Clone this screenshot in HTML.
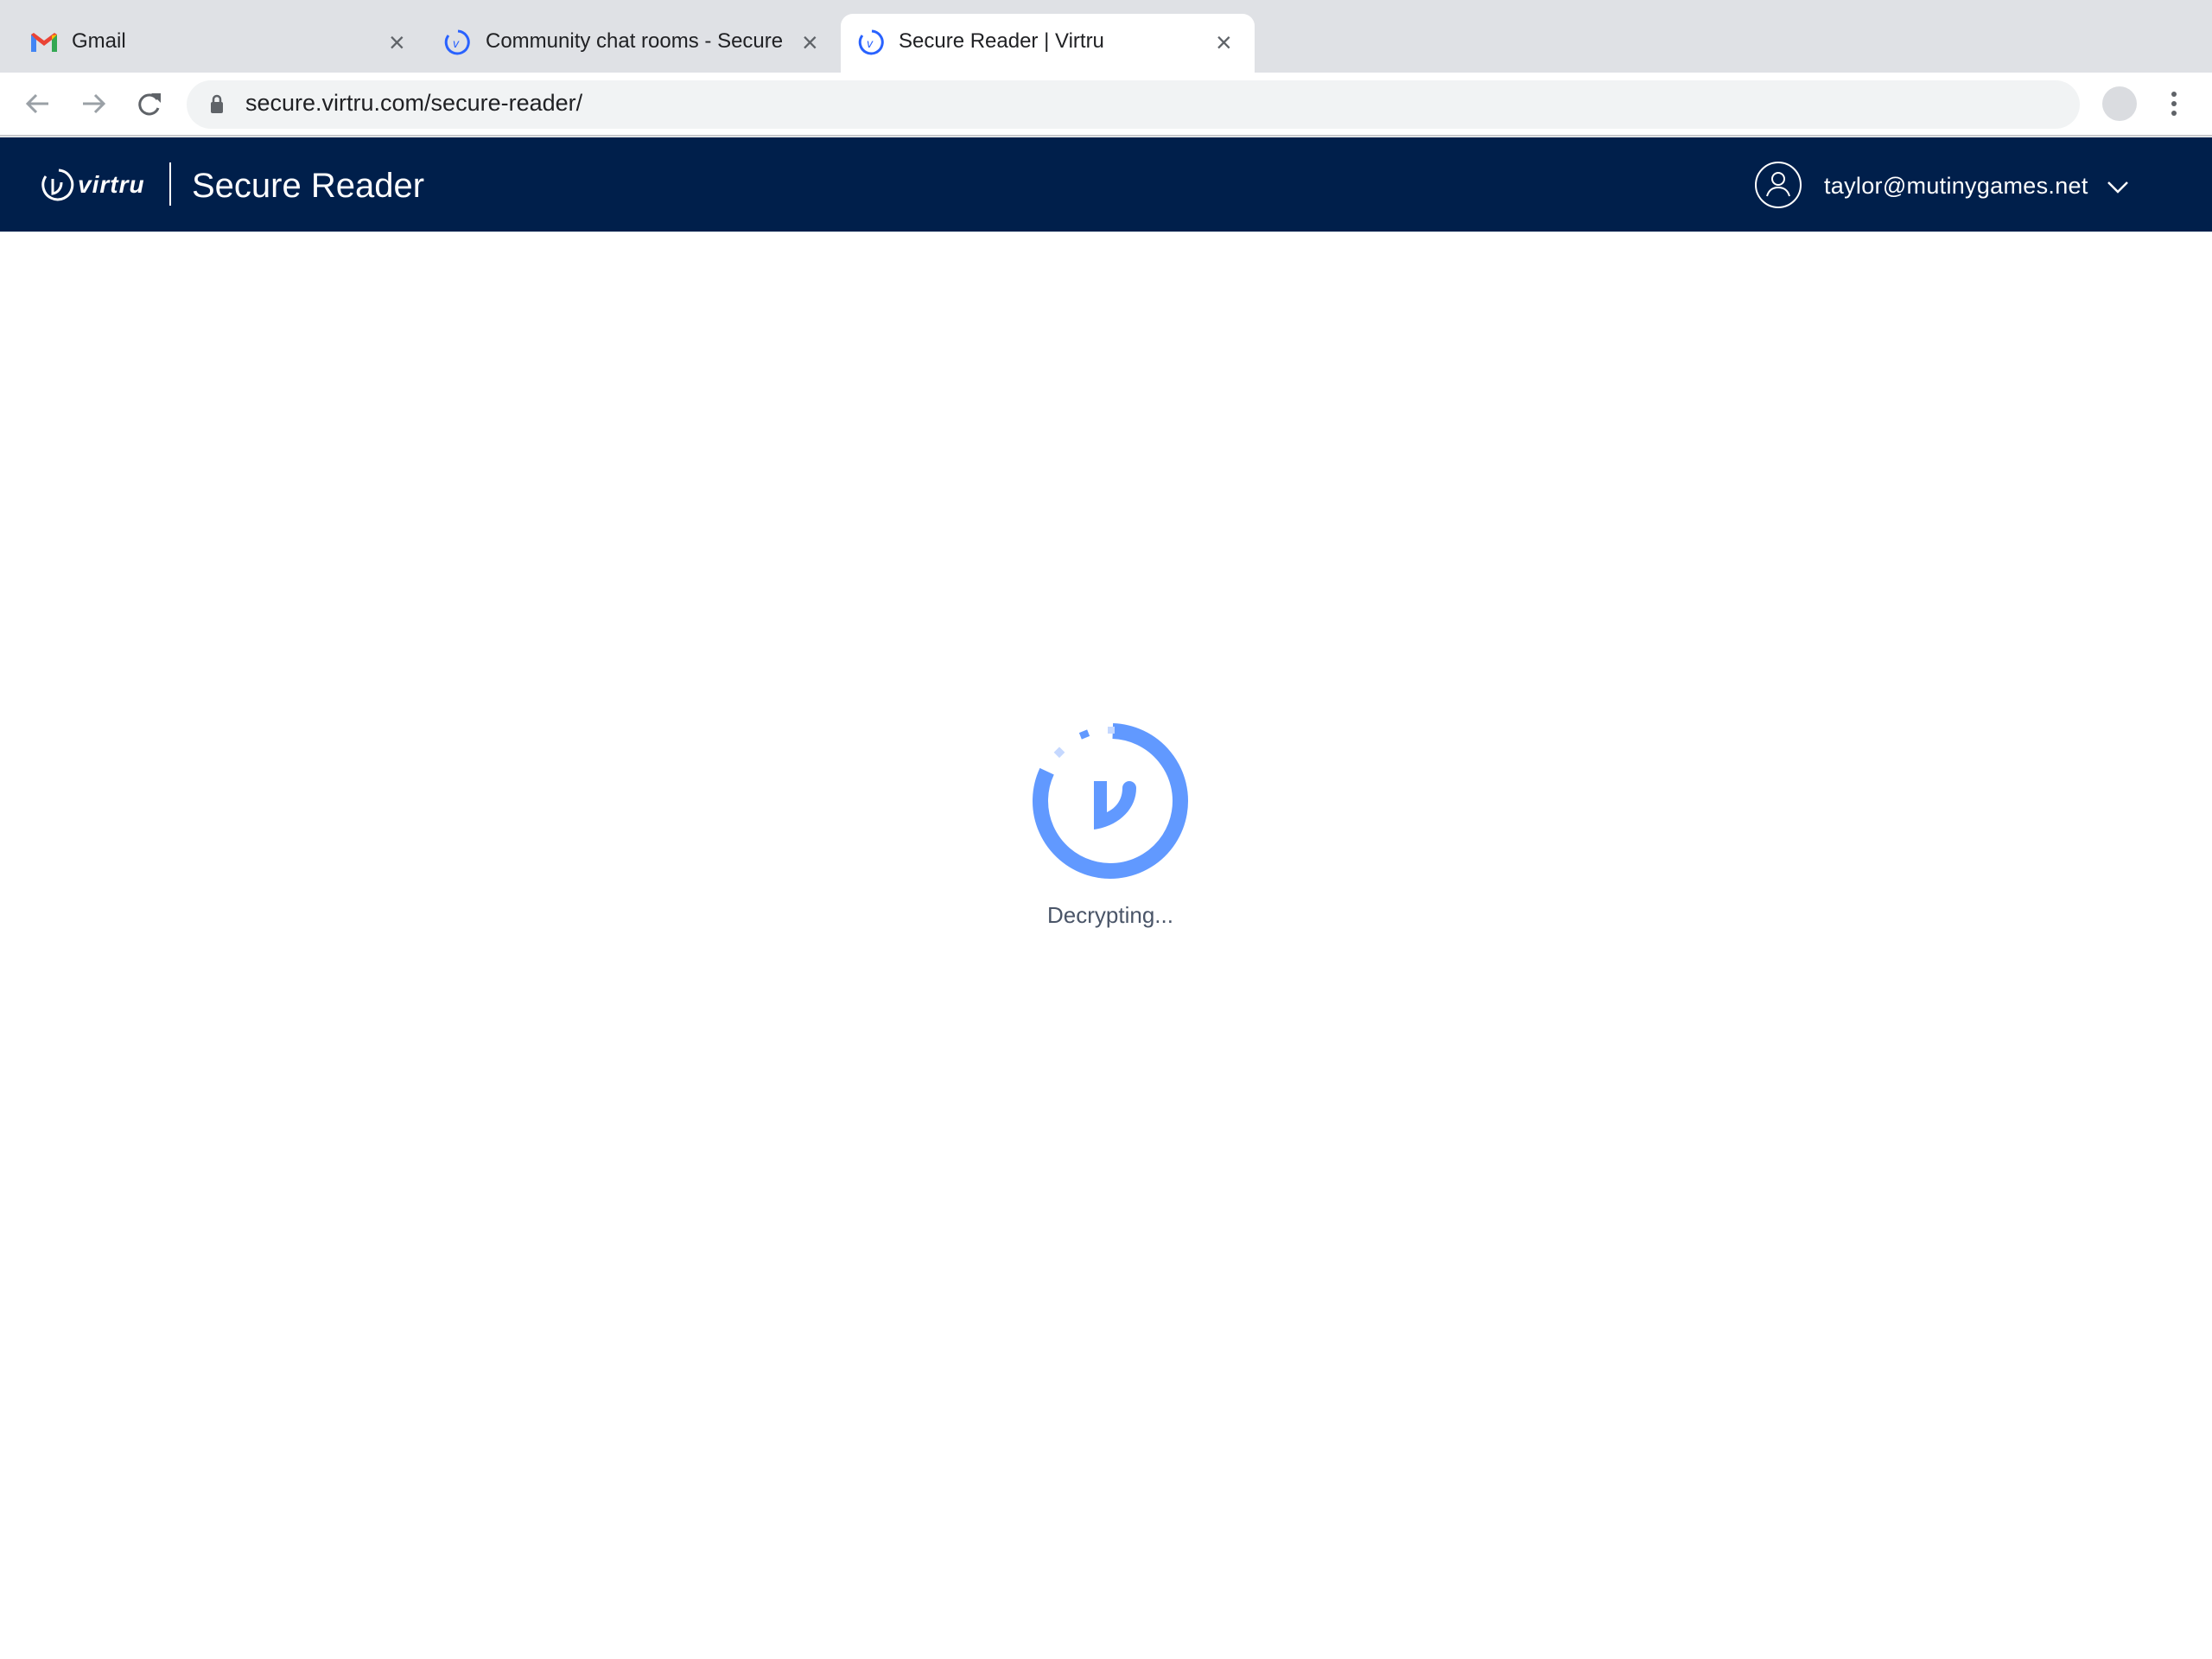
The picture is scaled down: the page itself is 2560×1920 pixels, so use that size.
<!DOCTYPE html>
<html><head><meta charset="utf-8"><style>
*{margin:0;padding:0;box-sizing:border-box}
body{width:2560px;height:1920px;overflow:hidden;background:#fff;font-family:"Liberation Sans",sans-serif;position:relative}
.a{position:absolute}
</style></head><body>
<div class="a" style="left:0;top:0;width:2560px;height:84px;background:#dfe1e5"></div>
<div class="a" style="left:973px;top:16px;width:479px;height:70px;background:#fff;border-radius:14px 14px 0 0"></div>
<div class="a" style="left:0;top:84px;width:2560px;height:74px;background:#fff;border-bottom:2px solid #c8c9cc"></div>
<svg class="a" style="left:34px;top:36px" width="34" height="26" viewBox="0 0 34 26">
<path d="M2 4v20h6V10l9 7 9-7v14h6V4l-3-2-12 9L5 2z" fill="#ea4335"/>
<path d="M2 4v20h6V10z" fill="#4285f4"/><path d="M26 10v14h6V4z" fill="#34a853"/><path d="M32 4l-6 6V5z" fill="#fbbc04"/></svg>
<div class="a" style="left:83px;top:34px;font-size:24px;color:#202124">Gmail</div>
<div class="a" style="left:450px;top:31px;font-size:32px;color:#5f6368">×</div>
<svg class="a" style="left:513px;top:33px" width="32" height="32" viewBox="0 0 32 32"><path d="M17 3A13 13 0 1 1 6 8" fill="none" stroke="#2962ff" stroke-width="3"/><text x="11" y="22" font-size="14" font-style="italic" fill="#2962ff" font-family="Liberation Sans">v</text></svg>
<div class="a" style="left:562px;top:34px;font-size:24px;color:#202124">Community chat rooms - Secure</div>
<div class="a" style="left:928px;top:31px;font-size:32px;color:#5f6368">×</div>
<svg class="a" style="left:992px;top:33px" width="32" height="32" viewBox="0 0 32 32"><path d="M17 3A13 13 0 1 1 6 8" fill="none" stroke="#2962ff" stroke-width="3"/><text x="11" y="22" font-size="14" font-style="italic" fill="#2962ff" font-family="Liberation Sans">v</text></svg>
<div class="a" style="left:1040px;top:34px;font-size:24px;color:#202124">Secure Reader | Virtru</div>
<div class="a" style="left:1407px;top:31px;font-size:32px;color:#5f6368">×</div>
<svg class="a" style="left:28px;top:103px" width="170" height="34" viewBox="0 0 170 34">
<path d="M28 17H5M14 7L4 17l10 10" fill="none" stroke="#9aa0a6" stroke-width="3"/>
<path d="M68 17h23M82 7l10 10-10 10" fill="none" stroke="#9aa0a6" stroke-width="3"/>
<path d="M154 12A11 11 0 1 0 155 22" fill="none" stroke="#5f6368" stroke-width="3"/><path d="M147 5h11v11z" fill="#5f6368"/></svg>
<div class="a" style="left:216px;top:93px;width:2191px;height:56px;background:#f1f3f4;border-radius:28px"></div>
<svg class="a" style="left:243px;top:108px" width="16" height="24" viewBox="0 0 16 24"><path d="M4 11V7a4 4 0 0 1 8 0v4" fill="none" stroke="#5f6368" stroke-width="2.5"/><rect x="1" y="10" width="14" height="13" rx="2" fill="#5f6368"/></svg>
<div class="a" style="left:284px;top:104px;font-size:27px;color:#202124">secure.virtru.com/secure-reader/</div>
<div class="a" style="left:2433px;top:100px;width:40px;height:40px;border-radius:50%;background:#dadce0"></div>
<div class="a" style="left:2513px;top:106px;width:6px;height:6px;border-radius:50%;background:#5f6368;box-shadow:0 11px 0 #5f6368,0 22px 0 #5f6368"></div>
<div class="a" style="left:0;top:159px;width:2560px;height:109px;background:#001f4b"></div>
<svg class="a" style="left:46px;top:194px" width="40" height="42" viewBox="0 0 40 42"><path d="M22 3A17 17 0 1 1 7 10" fill="none" stroke="#fff" stroke-width="3"/><path d="M15 13v17c6-1 10-6 10-13" fill="none" stroke="#fff" stroke-width="3"/></svg>
<div class="a" style="left:90px;top:198px;font-size:28px;font-weight:bold;font-style:italic;color:#fff;letter-spacing:1px">virtru</div>
<div class="a" style="left:196px;top:188px;width:2px;height:50px;background:#fff"></div>
<div class="a" style="left:222px;top:193px;font-size:40px;color:#fff">Secure Reader</div>
<svg class="a" style="left:2029px;top:185px" width="58" height="58" viewBox="0 0 58 58"><circle cx="29" cy="29" r="26" fill="none" stroke="#fff" stroke-width="2"/><circle cx="29" cy="22" r="7" fill="none" stroke="#fff" stroke-width="2"/><path d="M16 42c2-7 7-10 13-10s11 3 13 10" fill="none" stroke="#fff" stroke-width="2"/></svg>
<div class="a" style="left:2111px;top:200px;font-size:27px;color:#fff;letter-spacing:0.3px">taylor@mutinygames.net</div>
<svg class="a" style="left:2438px;top:208px" width="26" height="16" viewBox="0 0 26 16"><path d="M2 3l11 11L24 3" fill="none" stroke="#fff" stroke-width="2.5"/></svg>
<svg class="a" style="left:0;top:0" width="2560" height="1920">
<path d="M1287.8 846A81 81 0 1 1 1211.6 892.7" fill="none" stroke="#6199ff" stroke-width="18"/>
<rect x="1250" y="846" width="10" height="8" fill="#6199ff" transform="rotate(-22 1255 850)"/>
<rect x="1282" y="841" width="8" height="8" fill="#c5d8ff"/>
<rect x="1222" y="866" width="9" height="9" fill="#c5d8ff" transform="rotate(45 1226 870)"/>
<path d="M1266 904H1281V940C1292 935 1299 925 1299 912A8 8 0 0 1 1315 912C1315 936 1295 956 1266 960Z" fill="#6199ff"/>
</svg>
<div class="a" style="left:1085px;top:1044px;width:400px;text-align:center;font-size:26px;color:#4a5568">Decrypting...</div>
</body></html>
